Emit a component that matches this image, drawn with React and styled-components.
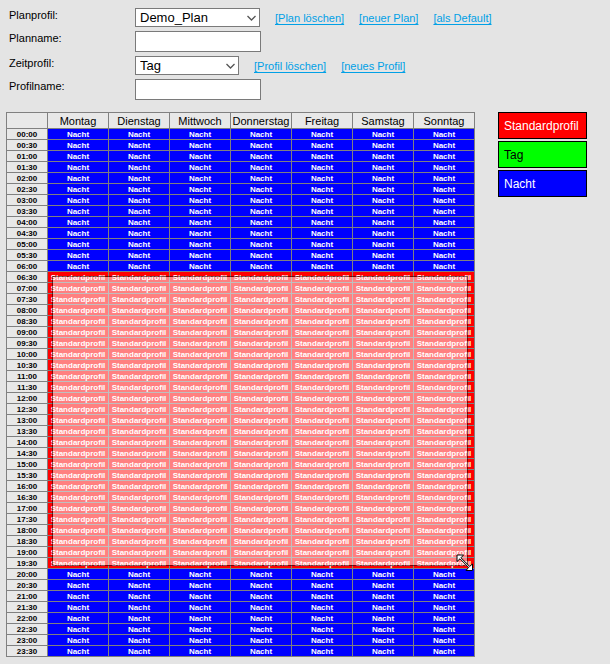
import React from "react";
import styled, { createGlobalStyle } from "styled-components";

const GlobalStyle = createGlobalStyle`
  *, *::before, *::after { box-sizing: border-box; }
  body {
    margin: 0;
    background: #e4e4e4;
    color: #000;
    font-family: "Liberation Sans", Arial, sans-serif;
    font-size: 11px;
  }
`;

const Page = styled.main`
  padding: 8px 6px;
`;

const Form = styled.form`
  display: grid;
  gap: 4px;
  padding-left: 3px;
`;

const FormRow = styled.div`
  display: grid;
  grid-template-columns: 126px 1fr;
  align-items: start;
`;

const Label = styled.label`
  line-height: 15px;
`;

const Controls = styled.div`
  display: flex;
  align-items: center;
  gap: 15px;
`;

const SelectBox = styled.div`
  display: grid;
  width: ${(p) => p.$width}px;
  & > * { grid-area: 1 / 1; }
`;

const Select = styled.select`
  appearance: none;
  width: 100%;
  height: 19px;
  padding: 0 20px 0 4px;
  border: 1px solid #7a7a7a;
  border-radius: 0;
  background: #fff;
  color: #000;
  font: 13px/17px "Liberation Sans", Arial, sans-serif;
`;

const Chevron = styled.svg`
  justify-self: end;
  align-self: center;
  margin-right: 4px;
  pointer-events: none;
`;

const TextInput = styled.input`
  width: 126px;
  height: 21px;
  padding: 0 4px;
  border: 1px solid #7a7a7a;
  background: #fff;
  font: 13px "Liberation Sans", Arial, sans-serif;
`;

const Action = styled.a`
  padding-top: 2px;
  color: #00a0e6;
  line-height: 15px;
  text-decoration: underline;
  text-underline-offset: 2px;
  white-space: nowrap;
`;

const Schedule = styled.section`
  display: flex;
  align-items: flex-start;
  gap: 23px;
  margin-top: 12px;
`;

const PlanArea = styled.div`
  position: relative;
  flex: none;
`;

const PlanTable = styled.table`
  border-collapse: collapse;
  table-layout: fixed;
  width: 469px;
`;

const TimeColumn = styled.col`
  width: 41px;
`;

const DayHead = styled.th`
  height: 16px;
  padding: 2px 0 0;
  border: 1px solid #808080;
  background: #e8e8e8;
  font-weight: normal;
  line-height: 13px;
`;

const TimeHead = styled.th`
  height: 11px;
  padding: 1px 0 0;
  border: 1px solid #808080;
  background: #e8e8e8;
  font-size: 8px;
  line-height: 9px;
`;

const Slot = styled.td`
  height: 11px;
  padding: 2px 0 0;
  border: 1px solid #808080;
  background: ${(p) => p.$color};
  color: #fff;
  font-size: 8px;
  font-weight: bold;
  line-height: 8px;
  text-align: center;
`;

const Selection = styled.div`
  position: absolute;
  top: 164px;
  right: 7px;
  bottom: 91px;
  left: 46px;
  border: 1px solid #000;
  background: #fff;
  opacity: 0.5;
`;

const ResizeCursor = styled.svg`
  position: absolute;
  right: 1px;
  bottom: 85px;
`;

const Legend = styled.ul`
  display: grid;
  gap: 2px;
  margin: 0;
  padding: 0;
  list-style: none;
`;

const LegendItem = styled.li`
  width: 89px;
  padding: 1px 5px 0;
  border: 1px solid #000;
  background: ${(p) => p.$color};
  color: ${(p) => p.$text};
  font-size: 12px;
  line-height: 24px;
`;

const days = ["Montag", "Dienstag", "Mittwoch", "Donnerstag", "Freitag", "Samstag", "Sonntag"];

const profiles = [
  { name: "Standardprofil", color: "#f00", text: "#fff" },
  { name: "Tag", color: "#0f0", text: "#000" },
  { name: "Nacht", color: "#00f", text: "#fff" },
];

const slots = Array.from({ length: 48 }, (_, i) => ({
  time: `${String(Math.floor(i / 2)).padStart(2, "0")}:${i % 2 ? "30" : "00"}`,
  profile: i >= 13 && i < 40 ? profiles[0] : profiles[2],
}));

function Dropdown({ id, width, options, value }) {
  return (
    <SelectBox $width={width}>
      <Select id={id} defaultValue={value}>
        {options.map((o) => <option key={o}>{o}</option>)}
      </Select>
      <Chevron width="9" height="6" viewBox="0 0 9 6" aria-hidden="true">
        <path d="M0.5 1 4.5 5 8.5 1" fill="none" stroke="#555" strokeWidth="1.3" />
      </Chevron>
    </SelectBox>
  );
}

export default function App() {
  return (
    <Page>
      <GlobalStyle />
      <Form>
        <FormRow>
          <Label htmlFor="plan">Planprofil:</Label>
          <Controls>
            <Dropdown id="plan" width={125} options={["Demo_Plan"]} value="Demo_Plan" />
            <Action href="#delete-plan">[Plan löschen]</Action>
            <Action href="#new-plan">[neuer Plan]</Action>
            <Action href="#default">[als Default]</Action>
          </Controls>
        </FormRow>
        <FormRow>
          <Label htmlFor="plan-name">Planname:</Label>
          <Controls><TextInput id="plan-name" type="text" /></Controls>
        </FormRow>
        <FormRow>
          <Label htmlFor="profile">Zeitprofil:</Label>
          <Controls>
            <Dropdown id="profile" width={104} options={profiles.map((p) => p.name)} value="Tag" />
            <Action href="#delete-profile">[Profil löschen]</Action>
            <Action href="#new-profile">[neues Profil]</Action>
          </Controls>
        </FormRow>
        <FormRow>
          <Label htmlFor="profile-name">Profilname:</Label>
          <Controls><TextInput id="profile-name" type="text" /></Controls>
        </FormRow>
      </Form>
      <Schedule>
        <PlanArea>
          <PlanTable>
            <colgroup>
              <TimeColumn />
              {days.map((d) => <col key={d} />)}
            </colgroup>
            <thead>
              <tr>
                <DayHead as="td" />
                {days.map((d) => <DayHead key={d} scope="col">{d}</DayHead>)}
              </tr>
            </thead>
            <tbody>
              {slots.map(({ time, profile }) => (
                <tr key={time}>
                  <TimeHead scope="row">{time}</TimeHead>
                  {days.map((d) => <Slot key={d} $color={profile.color}>{profile.name}</Slot>)}
                </tr>
              ))}
            </tbody>
          </PlanTable>
          <Selection />
          <ResizeCursor width="18" height="18" viewBox="0 0 18 18" aria-hidden="true">
            <path
              d="M1 1H7.5L5 3.8 13.6 12.4 16.5 10V16.5H10L12.6 13.4 4 4.8 1 7.5Z"
              fill="#fff" stroke="#000" strokeWidth="1"
            />
          </ResizeCursor>
        </PlanArea>
        <Legend>
          {profiles.map((p) => (
            <LegendItem key={p.name} $color={p.color} $text={p.text}>{p.name}</LegendItem>
          ))}
        </Legend>
      </Schedule>
    </Page>
  );
}
